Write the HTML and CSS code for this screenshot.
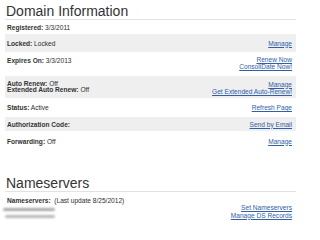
FILE: index.html
```html
<!DOCTYPE html>
<html>
<head>
<meta charset="utf-8">
<link rel="stylesheet" href="styles.css">
</head>
<body>
<div class="page">
  <h1 class="title">Domain Information</h1>
  <div class="row r1"><div class="lbl"><b>Registered:</b> 3/3/2011</div></div>
  <div class="row r2 gray"><div class="lbl"><b>Locked:</b> Locked</div><div class="links"><a href="#">Manage</a></div></div>
  <div class="row r3"><div class="lbl"><b>Expires On:</b> 3/3/2013</div><div class="links"><a href="#">Renew Now</a><a href="#">ConsoliDate Now!</a></div></div>
  <div class="row r4 gray"><div class="lbl two"><div><b>Auto Renew:</b> Off</div><div><b>Extended Auto Renew:</b> Off</div></div><div class="links"><a href="#">Manage</a><a href="#">Get Extended Auto-Renew!</a></div></div>
  <div class="row r5"><div class="lbl"><b>Status:</b> Active</div><div class="links"><a href="#">Refresh Page</a></div></div>
  <div class="row r6 gray"><div class="lbl"><b>Authorization Code:</b></div><div class="links"><a href="#">Send by Email</a></div></div>
  <div class="row r7"><div class="lbl"><b>Forwarding:</b> Off</div><div class="links"><a href="#">Manage</a></div></div>

  <h1 class="title ns">Nameservers</h1>
  <div class="nsrow">
    <div class="lbl"><b>Nameservers:</b>&nbsp; (Last update 8/25/2012)</div>
    <div class="nsbody">
      <div class="blur"><span class="s1"></span><span class="s2"></span></div>
      <div class="links wide"><a href="#">Set Nameservers</a><a href="#">Manage DS Records</a></div>
    </div>
  </div>
</div>
</body>
</html>
```
FILE: styles.css
```css
html, body { margin: 0; padding: 0; background: #fff; }
body { font-family: "Liberation Sans", Arial, sans-serif; color: #2e2e2e; }
.page { margin-left: 5px; width: 291px; }
.title {
  margin: 3px 0 0 0;
  padding-left: 1px;
  font-size: 14px;
  line-height: 16px;
  font-weight: normal;
  color: #333;
  border-bottom: 1px solid #e2e2e2;
}
.title.ns { margin-top: 24px; }
.row {
  display: flex;
  justify-content: space-between;
  align-items: flex-start;
  padding: 0 4px 0 2px;
  font-size: 6.6px;
  line-height: 7px;
}
.gray { background: #efefef; }
.lbl b { font-weight: bold; color: #333; }
.links { display: flex; flex-direction: column; align-items: flex-end; line-height: 7px; }
.links a { color: #3060a8; text-decoration: underline; }
.r1 { padding-top: 3.5px; padding-bottom: 3.5px; }
.r2 { padding-top: 5.5px; padding-bottom: 5.5px; }
.r3 { padding-top: 4px; padding-bottom: 6px; }
.r3 .lbl { margin-top: 1px; }
.r4 { padding-top: 4.5px; padding-bottom: 3.5px; }
.two { line-height: 6.5px; }
.r5 { padding-top: 6px; padding-bottom: 6px; }
.r6 { padding-top: 3.5px; padding-bottom: 3.5px; }
.r7 { padding-top: 6.5px; padding-bottom: 6.5px; }
.nsrow { padding: 5px 4px 0 2px; font-size: 6.6px; line-height: 7px; }
.nsbody { display: flex; justify-content: space-between; align-items: flex-start; }
.links.wide { line-height: 7.7px; margin-top: 0; }
.blur { width: 56px; height: 16px; margin-left: -6px; margin-top: 1px; }
.blur span { display: block; height: 3px; background: #a8a8a8; border-radius: 2px; filter: blur(1.2px); }
.blur .s1 { width: 52px; margin: 3px 0 0 2px; }
.blur .s2 { width: 50px; margin: 4px 0 0 4px; background: #b8b8b8; }
```
